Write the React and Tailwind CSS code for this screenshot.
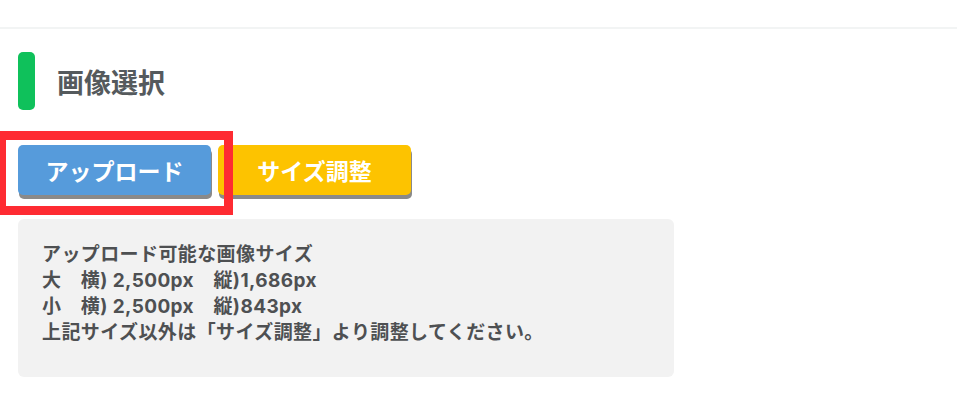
import React from 'react'

const font = { fontFamily: '"Noto Sans CJK JP", "Noto Sans", sans-serif' }
const bodyFont = { fontFamily: 'Inter, "Noto Sans CJK JP", sans-serif' }

const App = () => {
  return (
    <div className="w-[957px] h-[411px] bg-white overflow-hidden" style={font}>
      <div className="h-[29px] border-b-2 border-[#f2f4f4]"></div>

      <div className="pl-[18px] pt-[23px]">
        {/* section title */}
        <div className="flex items-center">
          <div className="w-[17px] h-[58px] rounded-[5px] bg-[#0fc15b]"></div>
          <h2 className="ml-[22px] text-[27px] leading-none font-bold text-[#555a5d]">画像選択</h2>
        </div>

        {/* buttons */}
        <div className="relative mt-[35px] flex gap-[7px]">
          <button className="w-[193px] h-[50px] rounded-[5px] bg-[#569bdb] text-white text-[23px] font-bold shadow-[1px_4px_0_#8a8a8a]">
            アップロード
          </button>
          <button className="w-[193px] h-[50px] rounded-[5px] bg-[#fdc300] text-white text-[23px] font-bold shadow-[1px_4px_0_#8a8a8a]">
            サイズ調整
          </button>
          <div className="absolute left-[-21px] top-[-14px] w-[236px] h-[84px] border-[9px] border-[#fe2b32] pointer-events-none"></div>
        </div>

        {/* info */}
        <div
          className="mt-[24px] w-[656px] h-[158px] rounded-[6px] bg-[#f2f2f2] pl-[24px] pt-[23px] text-[19px] leading-[26px] tracking-[0.4px] font-bold text-[#4e5052]"
          style={bodyFont}
        >
          <p>アップロード可能な画像サイズ</p>
          <p>大　横) 2,500px　縦)1,686px</p>
          <p>小　横) 2,500px　縦)843px</p>
          <p>上記サイズ以外は「サイズ調整」より調整してください。</p>
        </div>
      </div>
    </div>
  )
}

export default App
